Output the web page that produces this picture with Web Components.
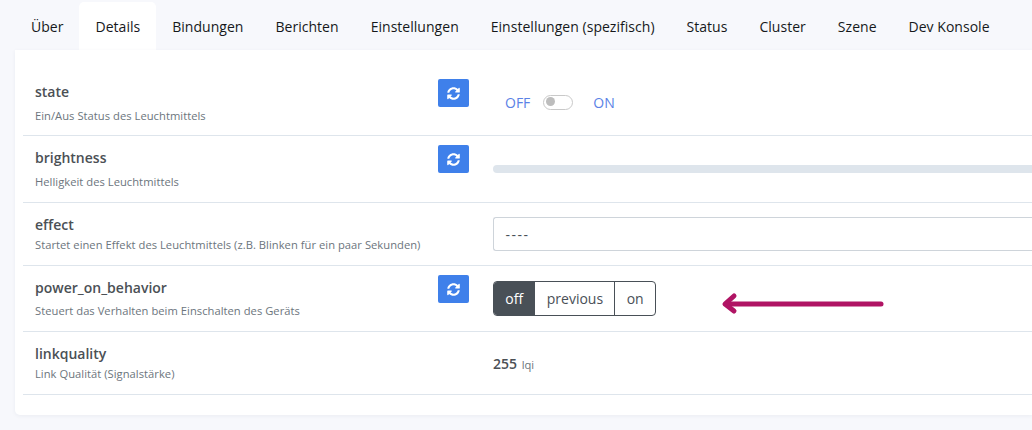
<!DOCTYPE html>
<html lang="de"><head><meta charset="utf-8"><title>Details</title>
<style>
html,body{margin:0;height:100%;overflow:hidden;background:#f7f8fc;font-family:"Open Sans","Noto Sans",sans-serif}
</style></head><body>
<device-page>
  <tab-item>Über</tab-item><tab-item active>Details</tab-item><tab-item>Bindungen</tab-item><tab-item>Berichten</tab-item><tab-item>Einstellungen</tab-item><tab-item>Einstellungen (spezifisch)</tab-item><tab-item>Status</tab-item><tab-item>Cluster</tab-item><tab-item>Szene</tab-item><tab-item>Dev Konsole</tab-item>
  <expose-row slot="rows" name="state" desc="Ein/Aus Status des Leuchtmittels" refresh first><state-toggle></state-toggle></expose-row>
  <expose-row slot="rows" name="brightness" desc="Helligkeit des Leuchtmittels" refresh><range-bar></range-bar></expose-row>
  <expose-row slot="rows" name="effect" desc="Startet einen Effekt des Leuchtmittels (z.B. Blinken für ein paar Sekunden)"><select-box>----</select-box></expose-row>
  <expose-row slot="rows" name="power_on_behavior" desc="Steuert das Verhalten beim Einschalten des Geräts" refresh short><btn-group></btn-group></expose-row>
  <expose-row slot="rows" name="linkquality" desc="Link Qualität (Signalstärke)"><lqi-value></lqi-value></expose-row>
  <annot-arrow slot="rows"></annot-arrow>
</device-page>
<script>
const def=(n,css,html,init)=>customElements.define(n,class extends HTMLElement{connectedCallback(){if(this.shadowRoot)return;const s=this.attachShadow({mode:'open'});s.innerHTML='<style>'+css+'</style>'+(typeof html==='function'?html(this):html);init&&init(s,this)}});
def('device-page',`
:host{display:block;height:430px;font-family:"Open Sans","Noto Sans",sans-serif}
nav{display:flex;padding:2px 0 0 15px;height:48px}
.card{position:relative;margin-left:15px;height:365px;box-sizing:border-box;padding:19px 0 0 8px;background:#fff;border-radius:0 0 0 5px;box-shadow:0 1px 4px rgba(30,50,90,.06)}
`,`<nav><slot></slot></nav><section class="card"><slot name="rows"></slot></section>`);
def('tab-item',`
:host{display:flex;align-items:center;box-sizing:border-box;height:48px;padding:0 16px;font-size:14px;letter-spacing:.03px;color:#16181b;white-space:nowrap;border-radius:5px 5px 0 0}
:host([active]){background:#fff}
`,`<slot></slot>`);
def('expose-row',`
:host{display:grid;grid-template-columns:458px 1fr;border-bottom:1px solid #dee5ec}
.l{display:flex;justify-content:space-between;align-items:flex-start;padding:11px 12px 10px}
:host([refresh]) .l{padding-top:9px}
:host([refresh]) .t{padding-top:2px}
:host([refresh]) .d{margin-top:4px}
:host([short]) .d{margin-top:3px}
:host([first]) .l{padding:10px 12px 9px}
:host([first]) .t{padding-top:2px}
:host([first]) .d{margin-top:4px}
.n{font-size:14px;font-weight:600;line-height:21px;color:#4b5055}
.d{font-size:11.2px;line-height:20px;letter-spacing:.03px;color:#6c757d}
button{all:unset;box-sizing:border-box;width:31px;height:28px;background:#3f80ea;border-radius:2px;display:flex;align-items:center;justify-content:center}
svg{width:13px;height:13px;fill:#fff}
.r{padding-left:12px;display:flex;align-items:center;min-width:0}
`,h=>`<div class="l"><div class="t"><div class="n">${h.getAttribute('name')}</div><div class="d">${h.getAttribute('desc')}</div></div>${h.hasAttribute('refresh')?`<button aria-label="Aktualisieren"><svg viewBox="0 0 512 512"><path d="M370.72 133.28C339.458 104.008 298.888 87.962 255.848 88c-77.458.068-144.328 53.178-162.791 126.85-1.344 5.363-6.122 9.15-11.651 9.15H24.103c-7.498 0-13.194-6.807-11.807-14.176C33.933 94.924 134.813 8 256 8c66.448 0 126.791 26.136 171.315 68.685L463.03 40.97C478.149 25.851 504 36.559 504 57.941V192c0 13.255-10.745 24-24 24H345.941c-21.382 0-32.09-25.851-16.971-40.971l41.75-41.749zM32 296h134.059c21.382 0 32.09 25.851 16.971 40.971l-41.75 41.75c31.262 29.273 71.835 45.319 114.876 45.28 77.418-.07 144.315-53.144 162.787-126.849 1.344-5.363 6.122-9.15 11.651-9.15h57.304c7.498 0 13.194 6.807 11.807 14.176C478.067 417.076 377.187 504 256 504c-66.448 0-126.791-26.136-171.315-68.685L48.97 471.03C33.851 486.149 8 475.441 8 454.059V320c0-13.255 10.745-24 24-24z"/></svg></button>`:''}</div><div class="r"><slot></slot></div>`);
def('state-toggle',`
:host{display:flex;align-items:center;padding-left:12px;color:#5b82e6;font-size:14px}
i{display:block;box-sizing:border-box;width:30px;height:15px;margin:0 20px 0 13px;border:1.5px solid #c9c9c9;border-radius:8px;padding:1.5px 2px}
b{display:block;width:9px;height:9px;border-radius:50%;background:#bdbdbd}
`,`<span>OFF</span><i><b></b></i><span>ON</span>`);
def('range-bar',`:host{display:block;width:100%;height:8px;background:#dee5ec;border-radius:4px 0 0 4px}`,``);
def('select-box',`:host{display:block;box-sizing:border-box;width:100%;height:34px;line-height:34px;padding-left:11.5px;border:1px solid #ced4da;border-right:0;border-radius:3px 0 0 3px;font-size:14px;letter-spacing:1.5px;color:#495057;background:#fff}`,`<slot></slot>`);
def('btn-group',`
:host{display:flex;height:35px;box-sizing:border-box;border:1px solid #495057;border-radius:4px;overflow:hidden;font-size:14px;color:#495057}
span{display:flex;align-items:center;padding:0 11.3px;border-left:1px solid #495057}
span:first-of-type{background:#495057;color:#fff;border:0}
`,`<span>off</span><span>previous</span><span>on</span>`);
def('lqi-value',`:host{display:block;font-size:14px;color:#4b5055;font-weight:600;margin-top:1px}small{font-size:11.2px;font-weight:400;color:#6c757d;margin-left:1px}`,`255 <small>lqi</small>`);
def('annot-arrow',`:host{position:absolute;left:705px;top:240px;width:165px;height:24px}svg{display:block;overflow:visible}`,`<svg width="165" height="24" viewBox="0 0 165 24" fill="none" stroke="#b01464" stroke-linecap="round" stroke-linejoin="round"><path d="M161 14H7" stroke-width="5"/><path d="M14 6 5 14l9 7" stroke-width="5"/></svg>`);
</script>
</body></html>
